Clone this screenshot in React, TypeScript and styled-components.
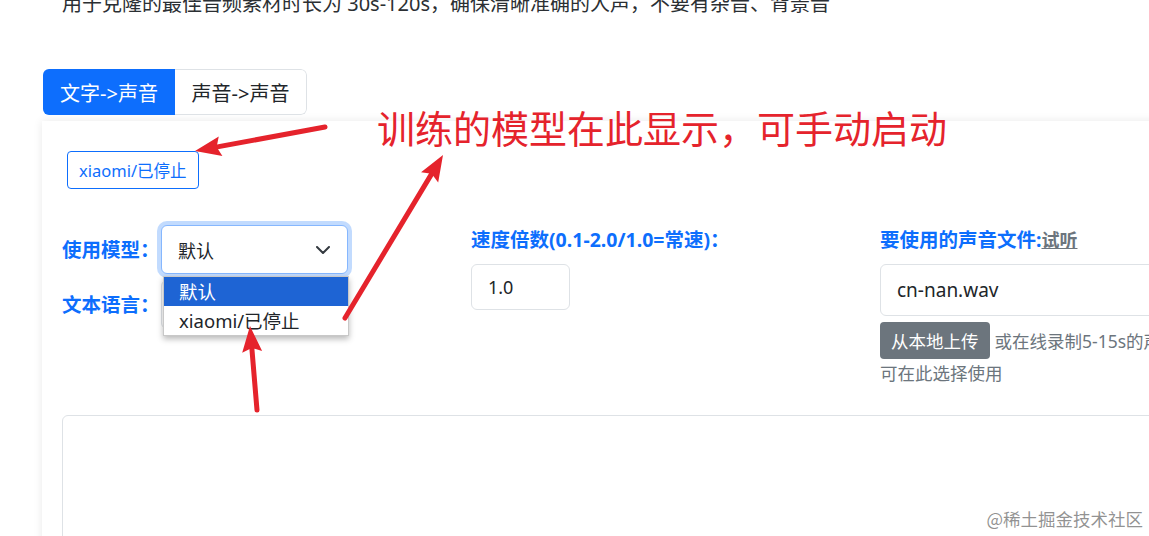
import React from "react";
import styled, { createGlobalStyle } from "styled-components";

const RED = "#e5232c";

const GlobalStyle = createGlobalStyle`
  html, body {
    margin: 0;
    padding: 0;
    background: #fff;
    overflow: hidden;
  }
  body {
    font-family: "Noto Sans", "Noto Sans CJK SC", sans-serif;
    color: #212529;
  }
`;

const Page = styled.div`
  position: relative;
  width: 1149px;
  height: 536px;
  overflow: hidden;
  padding-left: 42px;
  box-sizing: border-box;
`;

const Intro = styled.p`
  margin: -11px 0 0 20px;
  font-size: 20px;
  line-height: 30px;
  white-space: nowrap;
  color: #2b2f33;
`;

const Tabs = styled.div`
  display: flex;
  width: fit-content;
  margin: 50px 0 0 1px;
  border-radius: 6px;
  overflow: hidden;
`;

const Tab = styled.button<{ $active?: boolean }>`
  width: 132px;
  height: 46px;
  padding: 0;
  box-sizing: border-box;
  font-family: inherit;
  font-size: 20px;
  border: ${({ $active }) => ($active ? "0" : "1px solid #dee2e6")};
  border-left: 0;
  border-radius: ${({ $active }) => ($active ? "0" : "0 6px 6px 0")};
  background: ${({ $active }) => ($active ? "#0d6efd" : "#fff")};
  color: ${({ $active }) => ($active ? "#fff" : "#212529")};
`;

const Card = styled.div`
  margin-top: 6px;
  width: 1320px;
  height: 520px;
  background: #fff;
  box-shadow: 0 0 9px rgba(0, 0, 0, 0.09);
  padding: 30px 0 0 20px;
  box-sizing: border-box;
`;

const ModelBadge = styled.div`
  display: flex;
  align-items: center;
  width: fit-content;
  height: 38px;
  margin-left: 5px;
  padding: 0 11px;
  box-sizing: border-box;
  border: 1px solid #0d6efd;
  border-radius: 4px;
  color: #0d6efd;
  font-size: 16.5px;
`;

const FormGrid = styled.div`
  display: grid;
  grid-template-columns: 409px 409px 409px;
  align-items: start;
  margin-top: 36px;
`;

const ModelCol = styled.div`
  display: flex;
  flex-direction: column;
  gap: 6px;
`;

const FieldRow = styled.div`
  display: flex;
  align-items: center;
`;

const Label = styled.label<{ $width?: number }>`
  ${({ $width }) => ($width ? `width: ${$width}px;` : "")}
  font-size: 19.5px;
  line-height: 26px;
  font-weight: 700;
  color: #0d6efd;
  white-space: nowrap;
`;

const Hint = styled.span`
  font-size: 18px;
  font-weight: 600;
  color: #6c757d;
  text-decoration: underline;
`;

const SelectBox = styled.div<{ $focused?: boolean }>`
  position: relative;
  display: flex;
  align-items: center;
  justify-content: space-between;
  width: 187px;
  height: 49px;
  padding: 0 17px 0 16px;
  box-sizing: border-box;
  border: 1px solid ${({ $focused }) => ($focused ? "#86b7fe" : "#dee2e6")};
  border-radius: 6px;
  box-shadow: ${({ $focused }) =>
    $focused ? "0 0 0 4px rgba(13, 110, 253, 0.25)" : "none"};
  background: #fff;
  font-size: 18px;
`;

const DropList = styled.ul`
  position: absolute;
  top: calc(100% + 3px);
  left: 1px;
  right: -2px;
  margin: 0;
  padding: 0;
  list-style: none;
  background: #fff;
  border: 1px solid #c8c8c8;
  box-shadow: 0 3px 6px rgba(0, 0, 0, 0.28);
  z-index: 2;
`;

const DropItem = styled.li<{ $selected?: boolean }>`
  height: 29px;
  padding-left: 15px;
  line-height: 29px;
  font-size: 18.5px;
  background: ${({ $selected }) => ($selected ? "#1e64d4" : "#fff")};
  color: ${({ $selected }) => ($selected ? "#fff" : "#212529")};
`;

const FieldCol = styled.div`
  display: flex;
  flex-direction: column;
  align-items: flex-start;
  padding-top: 2px;
  gap: 11px;
`;

const TextInput = styled.div<{ $width: number; $height: number; $size: number }>`
  display: flex;
  align-items: center;
  width: ${({ $width }) => $width}px;
  height: ${({ $height }) => $height}px;
  padding-left: 16px;
  box-sizing: border-box;
  border: 1px solid #dee2e6;
  border-radius: 6px;
  font-size: ${({ $size }) => $size}px;
`;

const VoiceField = styled.div`
  display: flex;
  flex-direction: column;
  gap: 6px;
`;

const UploadRow = styled.div`
  display: flex;
  align-items: center;
  gap: 5px;
  white-space: nowrap;
  font-size: 17.5px;
  color: #6c757d;
`;

const GrayButton = styled.button`
  height: 37px;
  padding: 0 11px;
  border: 0;
  border-radius: 4px;
  background: #6c757d;
  color: #fff;
  font-family: inherit;
  font-size: 17.5px;
`;

const HelpLine = styled.div`
  margin-top: -4px;
  font-size: 17.5px;
  line-height: 24px;
  color: #6c757d;
`;

const TextArea = styled.div`
  margin-top: 30px;
  width: 1250px;
  height: 200px;
  border: 1px solid #dee2e6;
  border-radius: 6px;
`;

const Overlay = styled.svg`
  position: absolute;
  left: 0;
  top: 0;
  width: 1149px;
  height: 536px;
  pointer-events: none;
  z-index: 5;
`;

const Annotation = styled.div`
  position: absolute;
  left: 377px;
  top: 108px;
  font-family: "Noto Sans CJK SC", sans-serif;
  font-size: 38px;
  line-height: 1;
  color: ${RED};
  white-space: nowrap;
  z-index: 5;
`;

const Watermark = styled.div`
  position: absolute;
  right: 6px;
  bottom: 5px;
  font-family: "Noto Sans CJK SC", sans-serif;
  font-size: 17.5px;
  color: rgba(110, 110, 110, 0.75);
  text-shadow: 0 0 2px #fff;
  z-index: 6;
`;

const Chevron = () => (
  <svg width="14" height="8" viewBox="0 0 14 8">
    <polyline
      points="1,1 7,7 13,1"
      fill="none"
      stroke="#343a40"
      strokeWidth="2"
      strokeLinecap="round"
      strokeLinejoin="round"
    />
  </svg>
);

const Arrow = ({ x1, y1, x2, y2 }: { x1: number; y1: number; x2: number; y2: number }) => {
  const len = Math.hypot(x2 - x1, y2 - y1);
  const ux = (x2 - x1) / len;
  const uy = (y2 - y1) / len;
  const head = 26;
  const half = 10;
  const bx = x2 - ux * head;
  const by = y2 - uy * head;
  const pts = [
    `${x2},${y2}`,
    `${bx - uy * half},${by + ux * half}`,
    `${bx + ux * 4},${by + uy * 4}`,
    `${bx + uy * half},${by - ux * half}`,
  ].join(" ");
  return (
    <g>
      <line
        x1={x1}
        y1={y1}
        x2={bx + ux * 6}
        y2={by + uy * 6}
        stroke={RED}
        strokeWidth="5"
        strokeLinecap="round"
      />
      <polygon points={pts} fill={RED} />
    </g>
  );
};

const App = () => {
  return (
    <Page>
      <GlobalStyle />
      <Intro>用于克隆的最佳音频素材时长为 30s-120s，确保清晰准确的人声，不要有杂音、背景音</Intro>
      <Tabs>
        <Tab $active>文字-&gt;声音</Tab>
        <Tab>声音-&gt;声音</Tab>
      </Tabs>
      <Card>
        <ModelBadge>xiaomi/已停止</ModelBadge>
        <FormGrid>
          <ModelCol>
            <FieldRow>
              <Label $width={99}>使用模型：</Label>
              <SelectBox $focused>
                <span>默认</span>
                <Chevron />
                <DropList>
                  <DropItem $selected>默认</DropItem>
                  <DropItem>xiaomi/已停止</DropItem>
                </DropList>
              </SelectBox>
            </FieldRow>
            <FieldRow>
              <Label $width={99}>文本语言：</Label>
              {/* covered by the open model list */}
              <SelectBox />
            </FieldRow>
          </ModelCol>
          <FieldCol>
            <Label>速度倍数(0.1-2.0/1.0=常速)：</Label>
            <TextInput $width={99} $height={46} $size={18}>
              1.0
            </TextInput>
          </FieldCol>
          <FieldCol>
            <Label>
              要使用的声音文件:<Hint>试听</Hint>
            </Label>
            <VoiceField>
              <TextInput $width={380} $height={52} $size={19}>
                cn-nan.wav
              </TextInput>
              <UploadRow>
                <GrayButton>从本地上传</GrayButton>
                或在线录制5-15s的声音文件，录制完成后
              </UploadRow>
              <HelpLine>可在此选择使用</HelpLine>
            </VoiceField>
          </FieldCol>
        </FormGrid>
        <TextArea />
      </Card>

      <Overlay viewBox="0 0 1149 536">
        <Arrow x1={325} y1={127} x2={195} y2={151} />
        <Arrow x1={345} y1={318} x2={443} y2={155} />
        <Arrow x1={257} y1={410} x2={250} y2={326} />
      </Overlay>
      <Annotation>训练的模型在此显示，可手动启动</Annotation>
      <Watermark>@稀土掘金技术社区</Watermark>
    </Page>
  );
};

export default App;
